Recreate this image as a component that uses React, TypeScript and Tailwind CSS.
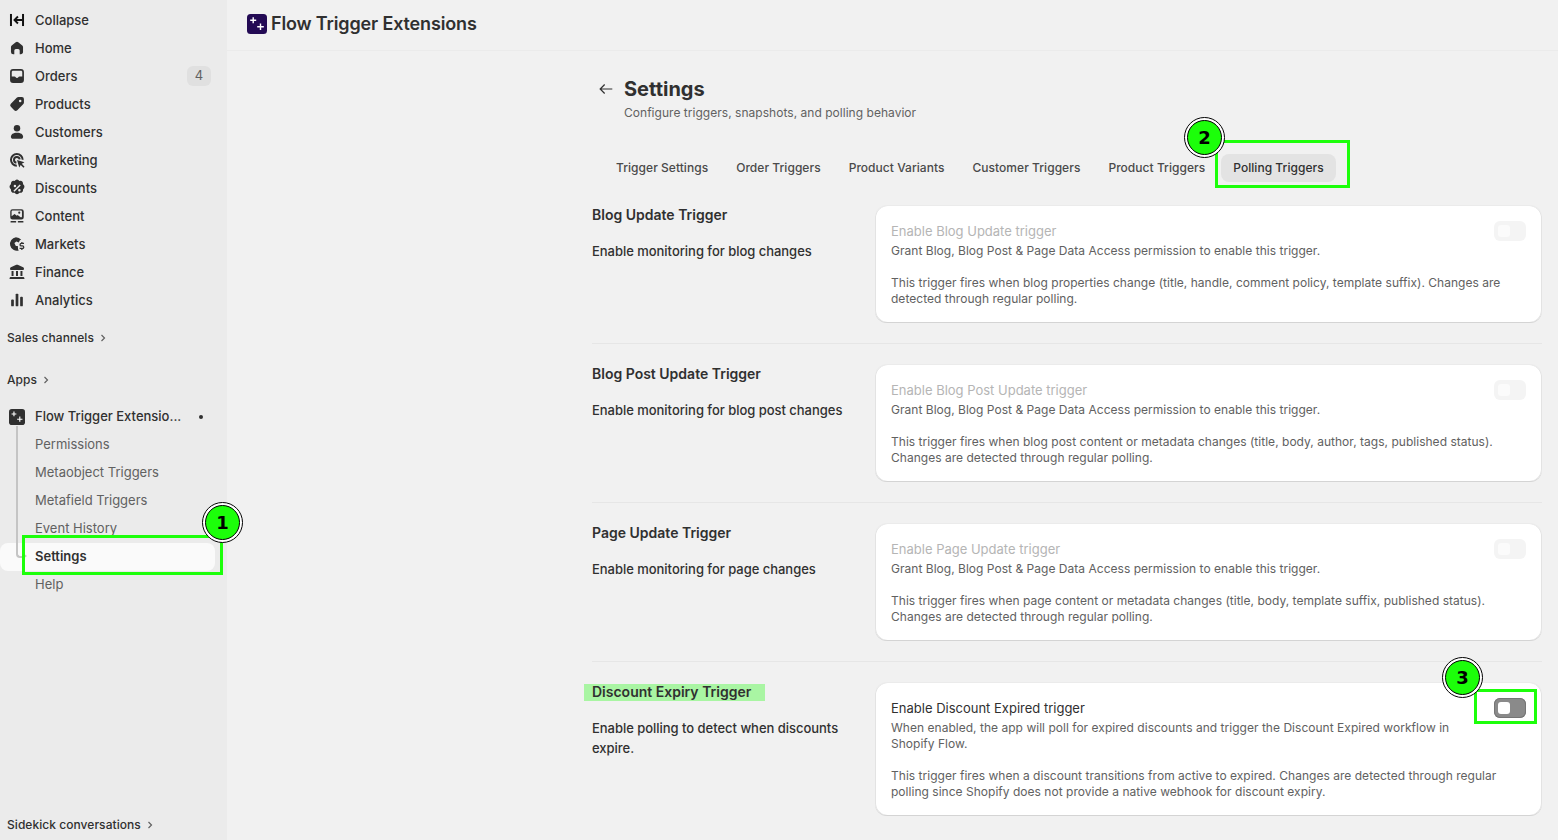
import React from "react";

const Ico = ({ children }: { children: React.ReactNode }) => (
  <svg viewBox="0 0 20 20" className="w-[18px] h-[18px] shrink-0 text-[#303030]" fill="currentColor">{children}</svg>
);

const icons: Record<string, React.ReactNode> = {
  Collapse: (
    <g fill="#111">
      <rect x="2.2" y="3.3" width="2.200" height="13.400" />
      <rect x="15.600" y="3.300" width="2.200" height="13.400" />
      <path d="M10.300 5.400 11.800 6.900 9.800 8.900H15.600V11.100H9.800L11.800 13.100 10.300 14.600 5.700 10Z" />
    </g>
  ),
  Home: <path d="M8.600 3.500a2.200 2.200 0 0 1 2.800 0l4.500 3.700c.5.400.8 1 .8 1.700v5.600c0 1.400-1.100 2.500-2.500 2.500H13v-4.200a1.800 1.800 0 0 0-1.800-1.800H8.800A1.800 1.800 0 0 0 7 12.800V17H5.800a2.500 2.500 0 0 1-2.500-2.500V8.900c0-.7.3-1.300.8-1.700Z" />,
  Orders: (
    <path transform="translate(-1 -1) scale(1.1)" fillRule="evenodd" d="M6 3h8a3 3 0 0 1 3 3v8a3 3 0 0 1-3 3H6a3 3 0 0 1-3-3V6a3 3 0 0 1 3-3Zm-1.300 7.500V6c0-.7.6-1.300 1.300-1.300h8c.7 0 1.300.6 1.300 1.300v4.500h-2.700c-.7 0-1.100.3-1.300.8-.2.500-.6.800-1.300.8s-1.100-.3-1.300-.8c-.2-.5-.6-.8-1.300-.8Z" />
  ),
  Products: (
    <path transform="translate(-1 -1) scale(1.1)" fillRule="evenodd" d="M11.500 3H15a2 2 0 0 1 2 2v3.500c0 .7-.3 1.300-.8 1.800l-5.900 5.900a2.200 2.200 0 0 1-3.100 0l-3.400-3.400a2.200 2.200 0 0 1 0-3.100l5.900-5.900c.5-.5 1.100-.8 1.800-.8Zm1.700 5.200a1.300 1.300 0 1 0 0-2.600 1.300 1.300 0 0 0 0 2.600Z" />
  ),
  Customers: (
    <>
      <circle cx="10" cy="5.800" r="3.600" />
      <path d="M3.200 15.200c0-2.700 2.500-4.500 6.800-4.500s6.800 1.800 6.800 4.500c0 1.300-.9 2.300-2.200 2.300H5.400c-1.300 0-2.200-1-2.200-2.300Z" />
    </>
  ),
  Marketing: (
    <>
      <path d="M16.300 9.800A6.500 6.500 0 1 0 9.800 16.300" fill="none" stroke="currentColor" strokeWidth="2.200" />
      <path d="M13 9.300A3.200 3.200 0 1 0 9.300 13" fill="none" stroke="currentColor" strokeWidth="2.200" />
      <path d="M10 10 18.300 12.600 15.300 14.300 18.400 17.400 17.200 18.600 14.100 15.500 12.500 18.400Z" />
    </>
  ),
  Discounts: (
    <path transform="translate(-1.500 -1.500) scale(1.15)" fillRule="evenodd" d="M8.400 2.500c.9-.8 2.300-.8 3.200 0l.8.7 1.100-.1c1.200 0 2.200 1 2.300 2.200l.1 1.100.7.800c.8.900.8 2.300 0 3.200l-.7.800-.1 1.100c-.1 1.200-1.100 2.200-2.300 2.300l-1.100.1-.8.700c-.9.800-2.300.8-3.200 0l-.8-.7-1.100-.1c-1.200-.1-2.200-1.100-2.300-2.300l-.1-1.100-.7-.8c-.8-.9-.8-2.300 0-3.200l.7-.8.1-1.100c.1-1.200 1.100-2.200 2.300-2.200l1.100.1ZM12.600 6.500 6.500 12.600l1 1 6.100-6.100ZM8 9.300a1.200 1.200 0 1 0 0-2.400 1.200 1.200 0 0 0 0 2.400Zm4.300 4a1.200 1.200 0 1 0 0-2.400 1.200 1.200 0 0 0 0 2.400Z" />
  ),
  Content: (
    <>
      <path fillRule="evenodd" d="M5 2.500h10A2.500 2.500 0 0 1 17.500 5v6.500A2.500 2.500 0 0 1 15 14H5a2.500 2.500 0 0 1-2.500-2.500V5A2.500 2.500 0 0 1 5 2.500Zm-1 7.800 3.300-2.600 2.500 2 .9-.7 3.300 2.500h.5c.6 0 1-.4 1-1V5c0-.6-.4-1-1-1H5c-.6 0-1 .4-1 1Zm8.500-2.800a1.200 1.200 0 1 0 0-2.400 1.200 1.200 0 0 0 0 2.400Z" />
      <rect x="2.800" y="15.600" width="6.300" height="1.600" rx=".6" />
      <rect x="10.900" y="15.600" width="6.300" height="1.600" rx=".6" />
    </>
  ),
  Markets: (
    <>
      <path d="M8.800 2.500a7.500 7.500 0 0 1 5.900 2.900l-1.500.5-1.200 2.500-2.600-1.200-2.300 1.800 1.600 3.200 2.200.1.300 3.500.8 1.300A7.500 7.500 0 1 1 8.800 2.500Z" />
      <path d="M17.800 9.300h-3a1.400 1.400 0 0 0 0 2.800h1.300a1.400 1.400 0 0 1 0 2.800h-3.200M15.400 7.800v1.500M15.400 14.900v1.700" fill="none" stroke="currentColor" strokeWidth="1.400" />
    </>
  ),
  Finance: (
    <path transform="translate(-1 -1) scale(1.1)" d="M9.300 2.800a2 2 0 0 1 1.400 0l5.500 2.300c.5.200.8.700.8 1.200v.6c0 .6-.5 1.100-1.100 1.100H4.100c-.6 0-1.100-.5-1.100-1.100v-.6c0-.5.300-1 .8-1.200ZM4.500 9h2v5h-2Zm4.500 0h2v5H9Zm4.500 0h2v5h-2ZM3.800 15h12.400c.7 0 1.300.6 1.300 1.300V17h-15v-.7c0-.7.6-1.300 1.300-1.300Z" />
  ),
  Analytics: (
    <>
      <rect x="3.500" y="9.500" width="3" height="7.500" rx="1" />
      <rect x="8.500" y="3" width="3" height="14" rx="1" />
      <rect x="13.500" y="6.500" width="3" height="10.500" rx="1" />
    </>
  ),
};

const navItems = ["Collapse", "Home", "Orders", "Products", "Customers", "Marketing", "Discounts", "Content", "Markets", "Finance", "Analytics"];

const Chevron = () => (
  <svg viewBox="0 0 10 10" className="w-[10px] h-[10px] text-[#616161]" fill="none" stroke="currentColor" strokeWidth="1.200">
    <path d="M3.500 2 6.500 5 3.500 8" />
  </svg>
);

const AppLogo = ({ color, big }: { color: string; big?: boolean }) => (
  <svg viewBox="0 0 20 20" className={big ? "w-5 h-5 shrink-0" : "w-4 h-4 shrink-0"} style={{ color }} fill="currentColor">
    <rect width="20" height="20" rx="3.500" />
    <path d="M6.200 3.200v6M3.200 6.200h6M13.500 9.500v6.500M10.200 12.800h6.600" stroke="#fff" strokeWidth="1.400" fill="none" />
  </svg>
);

const Ring = ({ n, className }: { n: number; className: string }) => (
  <div className={`absolute w-[41px] h-[41px] rounded-full bg-white border border-black flex items-center justify-center ${className}`}>
    <div className="w-[35px] h-[35px] rounded-full bg-[#1cff0a] border border-black flex items-center justify-center text-[18px] font-bold text-black font-['DejaVu_Sans',sans-serif] leading-none">
      {n}
    </div>
  </div>
);

type S = { title: string; desc: React.ReactNode; enable: string; body: React.ReactNode; p2: React.ReactNode; active?: boolean };

const sections: S[] = [
  {
    title: "Blog Update Trigger",
    desc: "Enable monitoring for blog changes",
    enable: "Enable Blog Update trigger",
    body: "Grant Blog, Blog Post & Page Data Access permission to enable this trigger.",
    p2: "This trigger fires when blog properties change (title, handle, comment policy, template suffix). Changes are detected through regular polling.",
  },
  {
    title: "Blog Post Update Trigger",
    desc: "Enable monitoring for blog post changes",
    enable: "Enable Blog Post Update trigger",
    body: "Grant Blog, Blog Post & Page Data Access permission to enable this trigger.",
    p2: "This trigger fires when blog post content or metadata changes (title, body, author, tags, published status). Changes are detected through regular polling.",
  },
  {
    title: "Page Update Trigger",
    desc: "Enable monitoring for page changes",
    enable: "Enable Page Update trigger",
    body: "Grant Blog, Blog Post & Page Data Access permission to enable this trigger.",
    p2: "This trigger fires when page content or metadata changes (title, body, template suffix, published status). Changes are detected through regular polling.",
  },
  {
    title: "Discount Expiry Trigger",
    desc: "Enable polling to detect when discounts expire.",
    enable: "Enable Discount Expired trigger",
    body: "When enabled, the app will poll for expired discounts and trigger the Discount Expired workflow in Shopify Flow.",
    p2: "This trigger fires when a discount transitions from active to expired. Changes are detected through regular polling since Shopify does not provide a native webhook for discount expiry.",
    active: true,
  },
];

const Section = ({ s, last }: { s: S; last: boolean }) => (
  <div className={`flex ${last ? "" : "border-b border-[#e6e6e6] pb-[21px] mb-[21px]"}`}>
    <div className="w-[283px] shrink-0">
      <h2 className="relative text-sm leading-5 font-semibold text-[#303030] mt-[-1px] h-5">
        {s.active && <span className="absolute left-[-8px] top-[2px] w-[181px] h-[17px] bg-[#a9f5a3]" />}
        <span className="relative">{s.title}</span>
      </h2>
      <p className="mt-[16px] text-[13px] leading-5 font-[450] tracking-[-0.03px] text-[#303030] w-[255px]">{s.desc}</p>
    </div>
    <div className="flex-1 min-w-0 bg-white rounded-xl shadow-[0_1px_0_0_#d4d4d4,0_-1px_0_0_#ebebeb,inset_1px_0_0_0_#e3e3e3,inset_-1px_0_0_0_#e3e3e3] px-4 pt-[15px] pb-[15px]">
      <div className="flex items-start justify-between gap-2">
        <div className="flex-1 min-w-0 max-w-[590px]">
          <div className={`text-[13px] leading-5 ${s.active ? "text-[#303030]" : "text-[#b5b5b5]"}`}>{s.enable}</div>
          <p className="text-xs leading-4 text-[#616161] mt-[2px] tracking-[0.025px]">{s.body}</p>
        </div>
        <div className={`relative w-8 h-5 shrink-0 rounded-md ${s.active ? "bg-[#8a8a8a] shadow-[inset_0_0_0_1px_#757575]" : "bg-[#f4f4f4]"}`}>
          <span className={`absolute left-[4px] top-[4px] w-3 h-3 rounded-[3px] ${s.active ? "bg-white" : "bg-[#fbfbfb]"}`} />
        </div>
      </div>
      <p className="text-xs leading-4 text-[#616161] mt-4 pr-4 tracking-[0.025px]">{s.p2}</p>
    </div>
  </div>
);

const tabs = ["Trigger Settings", "Order Triggers", "Product Variants", "Customer Triggers", "Product Triggers", "Polling Triggers"];

export default function App() {
  return (
    <div className="relative flex w-[1558px] h-[840px] overflow-hidden bg-[#f1f1f1] font-['Inter',sans-serif] text-[#303030]">
      <aside className="w-[227px] shrink-0 bg-[#ebebeb] flex flex-col pt-[6px] text-[13px] font-[450]">
        {navItems.map((n) => (
          <div key={n} className="h-7 flex items-center pl-2 pr-4 gap-[9px]">
            <Ico>{icons[n]}</Ico>
            <span className="leading-5">{n}</span>
            {n === "Orders" && (
              <span className="ml-auto w-6 h-5 rounded-md bg-[#e0e0e0] text-[13px] text-[#616161] flex items-center justify-center font-normal">4</span>
            )}
          </div>
        ))}
        <div className="mt-[10px] h-7 flex items-center pl-[7px] gap-1 text-xs tracking-[0.05px]">
          Sales channels <Chevron />
        </div>
        <div className="mt-[14px] h-7 flex items-center pl-[7px] gap-1 text-xs tracking-[0.05px]">
          Apps <Chevron />
        </div>
        <div className="relative mt-[9px]">
          <div className="h-7 flex items-center pl-[9px] gap-[10px] pr-[24px]">
            <AppLogo color="#303030" />
            <span className="flex-1 truncate font-[550]">Flow Trigger Extensio...</span>
            <span className="w-1 h-1 rounded-full bg-[#303030]" />
          </div>
          {["Permissions", "Metaobject Triggers", "Metafield Triggers", "Event History"].map((n) => (
            <div key={n} className="h-7 flex items-center pl-[35px] text-[#616161] font-normal">{n}</div>
          ))}
          <div className="h-7 w-[215px] flex items-center pl-[35px] bg-[#fafafa] rounded-lg font-semibold">Settings</div>
          <div className="h-7 flex items-center pl-[35px] text-[#616161] font-normal">Help</div>
          <div className="absolute left-4 top-[23px] w-[7px] h-[132px] border-l-2 border-b-2 border-[#c4c4c4] rounded-bl-sm" />
          <div className="absolute left-[23px] top-[150px] border-y-[3.5px] border-y-transparent border-l-[4px] border-l-[#c4c4c4]" />
        </div>
        <div className="mt-auto mb-[1px] h-7 flex items-center pl-[7px] gap-1 text-xs tracking-[0.05px]">
          Sidekick conversations <Chevron />
        </div>
      </aside>

      <main className="flex-1 flex flex-col min-w-0">
        <header className="h-[51px] shrink-0 border-b border-[#ebebeb] flex items-center pl-5 gap-[4px] pb-[3px]">
          <AppLogo color="#230a54" big />
          <span className="text-lg font-semibold text-[#303030] tracking-[-0.15px]">Flow Trigger Extensions</span>
        </header>
        <div className="pl-[365px] pr-4">
          <div className="flex items-start h-[51px] pt-[26px]">
            <svg viewBox="0 0 20 20" className="w-[18px] h-[18px] ml-[5px] mt-[3px] text-[#303030]" fill="none" stroke="currentColor" strokeWidth="1.300">
              <path d="M17 10H3.500M8.500 5l-5 5 5 5" />
            </svg>
          </div>
          <div className="pl-8 mt-[-25px]">
            <h1 className="text-xl leading-6 font-bold text-[#303030]">Settings</h1>
            <p className="text-xs leading-4 text-[#616161] mt-[4px] tracking-[0.03px]">Configure triggers, snapshots, and polling behavior</p>
          </div>
          <div className="flex gap-1 mt-[33px] ml-3">
            {tabs.map((t) => (
              <div key={t} className={`h-7 px-3 flex items-center rounded-lg text-xs font-medium tracking-[0.04px] ${t === "Polling Triggers" ? "bg-[#e3e3e3] text-[#303030]" : "text-[#4a4a4a]"}`}>{t}</div>
            ))}
          </div>
          <div className="mt-6">
            {sections.map((s, i) => (
              <Section key={s.title} s={s} last={i === sections.length - 1} />
            ))}
          </div>
        </div>
      </main>

      <div className="absolute left-[22px] top-[535px] w-[201px] h-[40px] border-[3px] border-[#1cff0a]" />
      <div className="absolute left-[1215px] top-[140px] w-[135px] h-[48px] border-[3px] border-[#1cff0a]" />
      <div className="absolute left-[1474px] top-[689px] w-[63px] h-[35px] border-[3px] border-[#1cff0a]" />
      <Ring n={1} className="left-[202px] top-[502px]" />
      <Ring n={2} className="left-[1184px] top-[117px]" />
      <Ring n={3} className="left-[1442px] top-[657px]" />
    </div>
  );
}
